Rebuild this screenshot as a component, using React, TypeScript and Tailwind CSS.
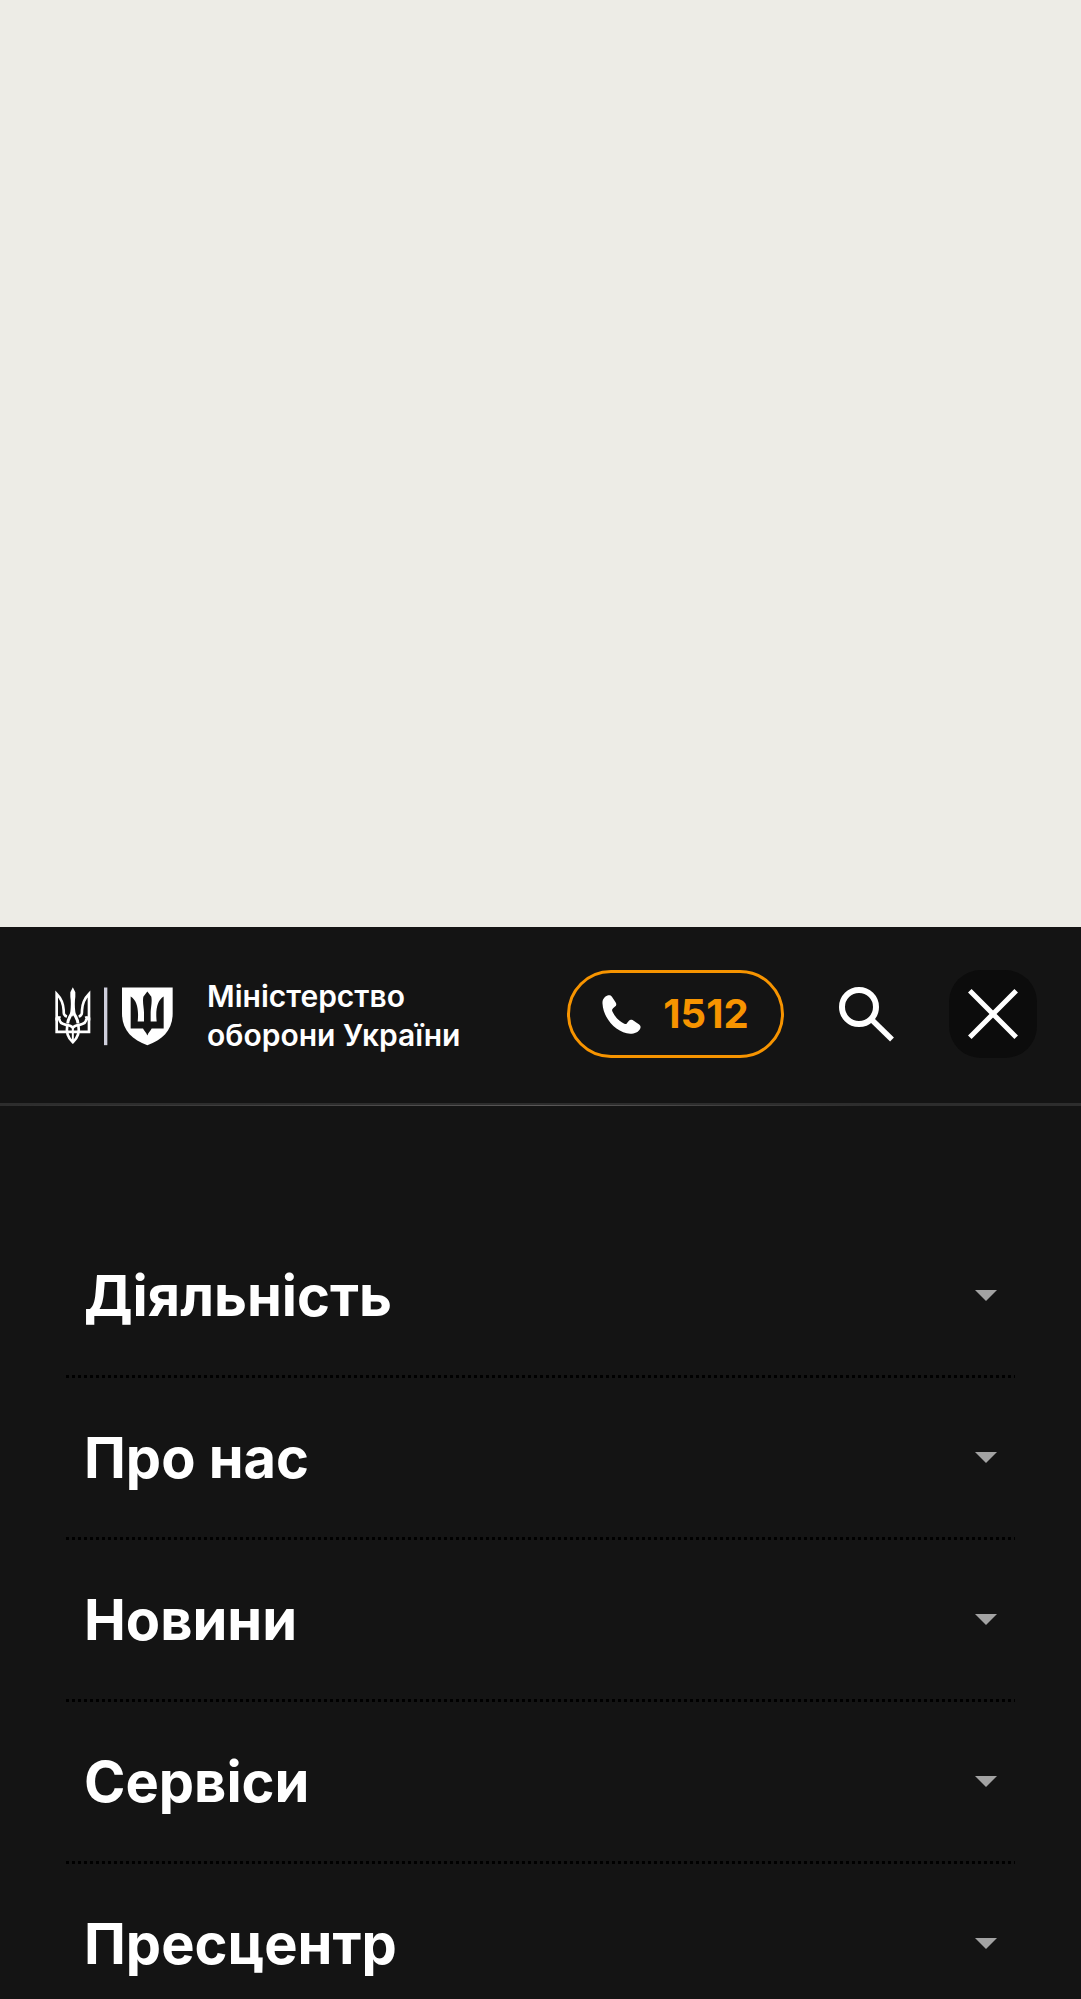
import React from "react";

const sections = ["Діяльність", "Про нас", "Новини", "Сервіси", "Пресцентр"];

function Emblems() {
  return (
    <svg viewBox="45 50 354 176" className="h-[59px] w-[118px] shrink-0" aria-hidden="true">
      <g transform="translate(39 41)" fill="none" stroke="#fff" strokeWidth="8">
        <path d="M20 96 C19 102 16 105 11 105 V29 C24 42 31 58 32 78 C32 88 32 95 42 97" />
        <path d="M99 96 C100 102 103 105 108 105 V29 C95 42 88 58 87 78 C87 88 87 95 77 97" />
        <path d="M11 100 V143 H108 V100" />
        <path d="M19 104 C19 114 27 120 39 122 C49 123 55 124 59.500 131 C64 124 70 123 80 122 C92 120 100 114 100 104" />
        <path d="M57 84 C52 98 44 106 44 118" strokeWidth="9" />
        <path d="M62 84 C67 98 75 106 75 118" strokeWidth="9" />
        <path d="M43 122 C38 148 45 162 59.500 174 C74 162 81 148 76 122" />
        <path d="M59.500 128 V173" strokeWidth="6" />
        <path d="M59.500 9 L67 24 V38 C65 52 65 66 67 84 L59.500 98 L52 84 C54 66 54 52 52 38 V24 Z" fill="#fff" stroke="none" />
      </g>
      <path d="M192 51 H202 V224 H192 Z" fill="#cfcfdc" />
      <path d="M246 51 H398 V129 C398 177 369 208 322 224 C275 208 246 177 246 129 Z" fill="#fff" />
      <path d="M322 63 L334 79 C337 96 332 111 332 126 V153 H350 C346 117 352 89 371 78 V174 H335 C331 182 326 185 322 195 C318 185 313 182 309 174 H272 V78 C291 89 297 117 293 153 H312 V126 C312 111 307 96 310 79 Z" fill="#141414" />
    </svg>
  );
}

function PhoneIcon() {
  return (
    <svg viewBox="156 134 117 118" className="size-[39px] shrink-0" aria-hidden="true">
      <path d="M157 160 C156 147 164 138 174 135 C180 134 183 135 186 140 L197 157 C200 162 199 166 195 169 L189 174 C186 177 185 179 187 184 C195 201 208 214 223 221 C228 223 230 222 232 218 L237 212 C240 208 244 208 248 210 L268 223 C273 227 273 232 271 236 C265 247 255 251 241 251 C202 250 159 207 157 160 Z" fill="#fff" />
    </svg>
  );
}

function SearchIcon() {
  return (
    <svg viewBox="0 0 55 55" className="size-[55px]" fill="none" stroke="#fff" aria-hidden="true">
      <circle cx="20" cy="20" r="17" strokeWidth="6" />
      <path d="M32 32 L53 52.500" strokeWidth="5.500" />
    </svg>
  );
}

function CloseIcon() {
  return (
    <svg viewBox="0 0 50 50" className="size-[50px]" fill="none" stroke="#fff" strokeWidth="5" aria-hidden="true">
      <path d="M1.800 1.800 L48.200 48.200 M48.200 1.800 L1.800 48.200" />
    </svg>
  );
}

export default function App() {
  return (
    <div className="flex h-screen flex-col overflow-hidden bg-[#141414] font-['Inter','Liberation_Sans',sans-serif] text-white">
      <div className="h-[927px] shrink-0 bg-[#edece6]" />
      <header className="shrink-0">
        <div className="flex h-44 items-center pr-11 pb-0.5 pl-[55px]">
          <a href="#home" className="flex items-center gap-[34px] pt-1">
            <Emblems />
            <span className="text-[30px] leading-[39px] font-semibold whitespace-nowrap">
              Міністерство
              <br />
              оборони України
            </span>
          </a>
          <a
            href="tel:1512"
            className="ml-auto flex h-[88px] w-[217px] shrink-0 items-center justify-center gap-[22px] rounded-full border-3 border-[#f79400] text-[40px] font-bold text-[#f79400]"
          >
            <PhoneIcon />
            1512
          </a>
          <button type="button" aria-label="Пошук" className="ml-[55px] shrink-0">
            <SearchIcon />
          </button>
          <button
            type="button"
            aria-label="Закрити меню"
            className="ml-[55px] flex size-[88px] shrink-0 items-center justify-center rounded-[32px] bg-[#0c0c0c]"
          >
            <CloseIcon />
          </button>
        </div>
        <div className="h-0.5 bg-[#2d2d2d]" />
        <div className="h-px bg-linear-to-r from-[#2d2d2d] via-[#5a5858] to-[#2d2d2d] to-80%" />
      </header>
      <nav aria-label="Головне меню" className="shrink-0 px-[66px] pt-[110px]">
        <ul>
          {sections.map((title) => (
            <li key={title}>
              <button
                type="button"
                aria-expanded="false"
                className="flex h-[159px] w-full items-center justify-between px-[18px] text-left text-[56px] font-bold"
              >
                {title}
                <svg viewBox="0 0 22 11" className="h-[11px] w-[22px]" aria-hidden="true">
                  <path d="M0 0 H22 L11 11 Z" fill="#a3a3a3" />
                </svg>
              </button>
              <div className="h-[3px] bg-[repeating-linear-gradient(90deg,#000_0px,#000_3px,transparent_3px,transparent_6px)]" />
            </li>
          ))}
        </ul>
      </nav>
    </div>
  );
}
